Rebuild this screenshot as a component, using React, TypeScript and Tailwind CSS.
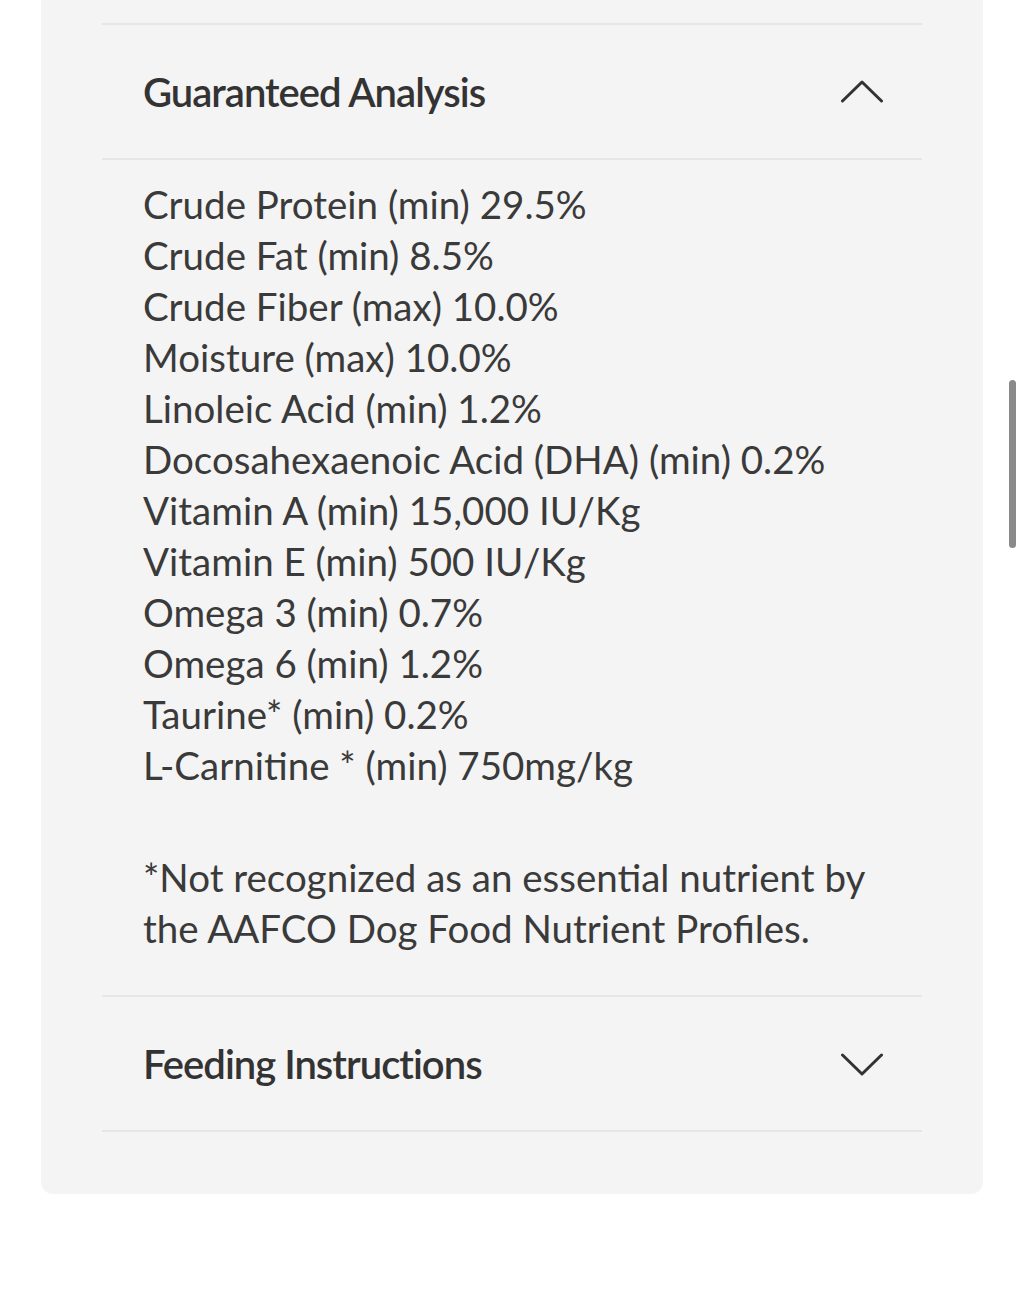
const nutrients = [
  "Crude Protein (min) 29.5%",
  "Crude Fat (min) 8.5%",
  "Crude Fiber (max) 10.0%",
  "Moisture (max) 10.0%",
  "Linoleic Acid (min) 1.2%",
  "Docosahexaenoic Acid (DHA) (min) 0.2%",
  "Vitamin A (min) 15,000 IU/Kg",
  "Vitamin E (min) 500 IU/Kg",
  "Omega 3 (min) 0.7%",
  "Omega 6 (min) 1.2%",
  "Taurine* (min) 0.2%",
  "L-Carnitine * (min) 750mg/kg",
];

function Chevron({ open }: { open: boolean }) {
  return (
    <svg width="42" height="24" viewBox="0 0 42 24" fill="none" className="text-[#333333]">
      <polyline
        points={open ? "1.5,21 21,2 40.5,21" : "1.5,3 21,22 40.5,3"}
        stroke="currentColor"
        strokeWidth="3"
        strokeLinecap="round"
        strokeLinejoin="round"
      />
    </svg>
  );
}

function SectionHeader({ title, open }: { title: string; open: boolean }) {
  return (
    <div className="flex h-[133px] items-center justify-between pl-[41px] pr-[39px]">
      <span className="text-[40px] font-semibold tracking-[-1px] text-[#333333]">{title}</span>
      <Chevron open={open} />
    </div>
  );
}

export default function App() {
  return (
    <div
      className="relative min-h-[1294px] bg-white"
      style={{ fontFamily: "Lato, 'Noto Sans', sans-serif" }}
    >
      <div className="ml-[41px] w-[942px] rounded-b-xl bg-[#f4f4f4] px-[61px] pt-[23px] pb-[62px]">
        <div className="h-[2px] bg-[#e6e6e6]" />
        <SectionHeader title="Guaranteed Analysis" open />
        <div className="h-[2px] bg-[#e6e6e6]" />
        <div className="pl-[41px] pt-[19px] pb-[41px] text-[38.5px] leading-[51px] text-[#3a3a3a]">
          <ul>
            {nutrients.map((n) => (
              <li key={n}>{n}</li>
            ))}
          </ul>
          <p className="mt-[61px]">
            *Not recognized as an essential nutrient by
            <br />
            the AAFCO Dog Food Nutrient Profiles.
          </p>
        </div>
        <div className="h-[2px] bg-[#e6e6e6]" />
        <SectionHeader title="Feeding Instructions" open={false} />
        <div className="h-[2px] bg-[#e6e6e6]" />
      </div>
      <div className="absolute left-[1009px] top-[380px] h-[168px] w-[7px] rounded-full bg-[#8a8a8a]" />
    </div>
  );
}
